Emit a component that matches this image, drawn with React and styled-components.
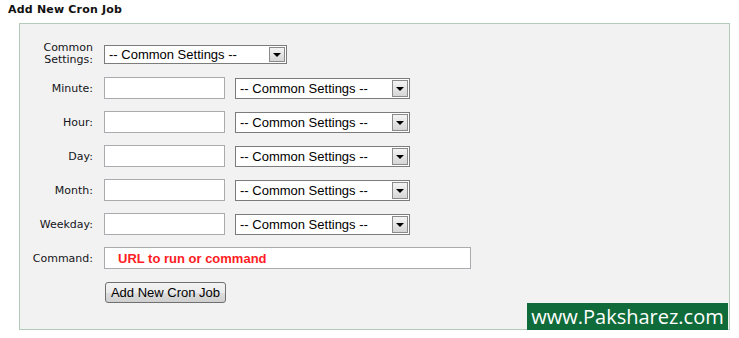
import React from "react";
import styled, { createGlobalStyle } from "styled-components";

const GlobalStyle = createGlobalStyle`
  html, body {
    margin: 0;
    padding: 0;
    background: #ffffff;
  }
  body {
    font-family: "DejaVu Sans", Verdana, sans-serif;
  }
`;

const Page = styled.div`
  padding-top: 3px;
  width: 739px;
  height: 338px;
  box-sizing: border-box;
`;

const Title = styled.h3`
  margin: 0 0 7px 8px;
  font-family: "DejaVu Sans", Verdana, sans-serif;
  font-size: 11px;
  line-height: 13px;
  font-weight: bold;
  letter-spacing: 0.2px;
  color: #111111;
`;

const Panel = styled.div`
  position: relative;
  box-sizing: border-box;
  width: 711px;
  margin-left: 19px;
  padding: 13px 0 20px 0;
  background: #f2f2f2;
  border: 1px solid #b5cbb9;
`;

const Row = styled.div`
  display: flex;
  align-items: center;
  height: 34px;
`;

const Label = styled.label`
  width: 73px;
  flex-shrink: 0;
  margin-right: 11px;
  text-align: right;
  font-size: 11px;
  line-height: ${(p) => (p.$tight ? "12px" : "13px")};
  color: #141420;
`;

const TextInput = styled.input`
  box-sizing: border-box;
  width: ${(p) => p.$width || 121}px;
  height: 22px;
  margin: 0 10px 0 0;
  padding: 0 0 0 ${(p) => (p.$padLeft ? p.$padLeft : 3)}px;
  border: 1px solid #a9abae;
  background: #ffffff;
  font-family: "Liberation Sans", Arial, sans-serif;
  font-size: 13px;
  outline: none;

  &::placeholder {
    color: #ff1c24;
    font-weight: bold;
    opacity: 1;
  }
`;

const SelectBox = styled.div`
  box-sizing: border-box;
  display: flex;
  align-items: stretch;
  width: ${(p) => p.$width}px;
  height: ${(p) => p.$height || 21}px;
  padding: 1px;
  border: 1px solid #7c7c7c;
  background: #ffffff;
`;

const Select = styled.select`
  flex: 1;
  min-width: 0;
  appearance: none;
  -webkit-appearance: none;
  border: none;
  outline: none;
  background: transparent;
  padding: 0 0 0 3px;
  margin: 0;
  font-family: "Liberation Sans", Arial, sans-serif;
  font-size: 13px;
  color: #000000;
`;

const ArrowBox = styled.div`
  box-sizing: border-box;
  width: 16px;
  display: flex;
  align-items: center;
  justify-content: center;
  border: 1px solid #8a8a8a;
  background: linear-gradient(#f4f4f4, #d6d6d6);

  &::after {
    content: "";
    width: 0;
    height: 0;
    border-left: 4px solid transparent;
    border-right: 4px solid transparent;
    border-top: 4px solid #000000;
    margin-top: 1px;
  }
`;

const Button = styled.button`
  box-sizing: border-box;
  width: 121px;
  height: 21px;
  margin-left: 1px;
  padding: 0;
  border: 1px solid #707070;
  border-radius: 3px;
  background: linear-gradient(#f3f3f3 0%, #ebebeb 50%, #dddddd 51%, #cfcfcf 100%);
  font-family: "Liberation Sans", Arial, sans-serif;
  font-size: 13px;
  color: #000000;
`;

const Watermark = styled.div`
  position: absolute;
  right: 1px;
  bottom: -1px;
  width: 201px;
  height: 27px;
  background: #0f6b3a;
  color: #ffffff;
  font-family: "Open Sans", "Liberation Sans", sans-serif;
  font-size: 20px;
  line-height: 27px;
  text-align: center;
`;

const SETTINGS = "-- Common Settings --";

function SettingsSelect({ width, height }) {
  return (
    <SelectBox $width={width} $height={height}>
      <Select defaultValue="">
        <option value="">{SETTINGS}</option>
      </Select>
      <ArrowBox />
    </SelectBox>
  );
}

const fields = ["Minute:", "Hour:", "Day:", "Month:", "Weekday:"];

export default function App() {
  return (
    <Page>
      <GlobalStyle />
      <Title>Add New Cron Job</Title>
      <Panel>
        <Row>
          <Label $tight>Common Settings:</Label>
          <SettingsSelect width={183} height={19} />
        </Row>
        {fields.map((f) => (
          <Row key={f}>
            <Label>{f}</Label>
            <TextInput type="text" />
            <SettingsSelect width={175} />
          </Row>
        ))}
        <Row>
          <Label>Command:</Label>
          <TextInput type="text" $width={367} $padLeft={13} placeholder="URL to run or command" />
        </Row>
        <Row>
          <Label />
          <Button>Add New Cron Job</Button>
        </Row>
        <Watermark>www.Paksharez.com</Watermark>
      </Panel>
    </Page>
  );
}
